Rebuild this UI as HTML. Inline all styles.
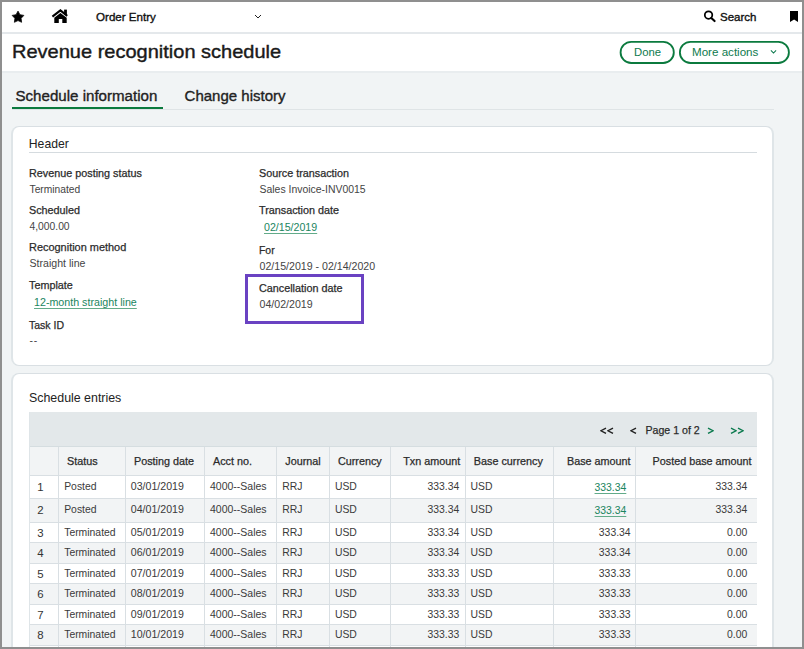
<!DOCTYPE html>
<html><head><meta charset="utf-8"><style>
html,body{margin:0;padding:0;width:804px;height:649px;overflow:hidden;background:#8f8f8f;}
body{position:relative;font-family:"Liberation Sans",sans-serif;}
.r,.t{position:absolute;}
.t{white-space:nowrap;}
.btn{border:2px solid #0b7a3e;border-radius:12px;background:#fff;}
.card{background:#fff;border-style:solid;border-width:1.5px 2px;border-color:#d9dfe3 #dfe5e8;border-radius:8px;}
</style></head><body>
<div class="r" style="left:0px;top:0px;width:804px;height:649px;background:#8f8f8f;"></div>
<div class="r" style="left:2px;top:2px;width:800px;height:645px;background:#f1f4f5;"></div>
<div class="r" style="left:2px;top:2px;width:800px;height:30px;background:#ffffff;"></div>
<div class="r" style="left:2px;top:32px;width:800px;height:2px;background:#e4e8eb;"></div>
<div class="r" style="left:2px;top:34px;width:800px;height:37px;background:#ffffff;"></div>
<div class="r" style="left:2px;top:71px;width:800px;height:2px;background:#e9edef;"></div>
<svg class="r" style="left:6px;top:4.7px" width="24" height="24" viewBox="0 0 24 24"><path d="M12.00 6.10 L13.94 9.63 L17.90 10.38 L15.14 13.32 L15.64 17.32 L12.00 15.60 L8.36 17.32 L8.86 13.32 L6.10 10.38 L10.06 9.63z" fill="#000" stroke="#000" stroke-width="0.7" stroke-linejoin="round"/></svg>
<svg class="r" style="left:46px;top:4.8px" width="28" height="24" viewBox="46 4 28 24"><path d="M52.4 15.6L60.4 9.4L67.2 14.9" stroke="#000" stroke-width="2.1" fill="none" stroke-linejoin="miter"/><rect x="64.1" y="8.6" width="2.8" height="5" fill="#000"/><path d="M54.3 16.8L60.4 12.1L66.7 16.8V21.9H62.3V18.1H58.8V21.9H54.3z" fill="#000"/></svg>
<div class="t " style="left:96px;top:11px;font-size:11.6px;line-height:11.6px;color:#111;font-weight:normal;-webkit-text-stroke:0.35px #111;">Order Entry</div>
<svg class="r" style="left:254px;top:14px" width="8" height="5" viewBox="0 0 8 5"><path d="M1 1l3 3 3-3" stroke="#222" stroke-width="1.0" fill="none"/></svg>
<svg class="r" style="left:698px;top:6px" width="24" height="20" viewBox="698 6 24 20"><circle cx="708.55" cy="15.0" r="3.75" stroke="#000" stroke-width="1.75" fill="none"/><path d="M711.3 17.9L714.6 21.1" stroke="#000" stroke-width="2.1" stroke-linecap="round"/></svg>
<div class="t " style="left:720px;top:12px;font-size:11.5px;line-height:11.5px;color:#111;font-weight:normal;-webkit-text-stroke:0.35px #111;">Search</div>
<svg class="r" style="left:789.9px;top:10.7px" width="8.2" height="11.5" viewBox="0 0 8.2 11.5"><path d="M0 0H8.2V11L4.1 8.5 0 11z" fill="#000"/></svg>
<div class="t " style="left:11.6px;top:42px;font-size:19px;line-height:19px;color:#1a1a1a;font-weight:normal;-webkit-text-stroke:0.4px #1a1a1a;transform:scaleX(1.053);transform-origin:0 0;">Revenue recognition schedule</div>
<svg class="r" style="left:600px;top:34px" width="200" height="37" viewBox="600 34 200 37"><rect x="620.6" y="41.8" width="53.2" height="21.2" rx="10.6" fill="#fff" stroke="#0b7a3e" stroke-width="1.85"/><rect x="679.9" y="41.8" width="109" height="21.2" rx="10.6" fill="#fff" stroke="#0b7a3e" stroke-width="1.85"/></svg>
<div class="t " style="left:634px;top:47px;font-size:11.3px;line-height:11.3px;color:#0e7a4e;font-weight:normal;">Done</div>
<div class="t " style="left:692px;top:46px;font-size:11.6px;line-height:11.6px;color:#0e7a4e;font-weight:normal;">More actions</div>
<svg class="r" style="left:768px;top:48px" width="10" height="8" viewBox="768 48 10 8"><path d="M770.9 50.4L773.5 53.1L776.1 50.4" stroke="#0e7a4e" stroke-width="1.05" fill="none"/></svg>
<div class="t " style="left:15.5px;top:88px;font-size:15.1px;line-height:15.1px;color:#222;font-weight:normal;-webkit-text-stroke:0.35px #222;">Schedule information</div>
<div class="t " style="left:184.6px;top:88px;font-size:15.0px;line-height:15.0px;color:#222;font-weight:normal;-webkit-text-stroke:0.35px #222;">Change history</div>
<div class="r" style="left:12px;top:108.6px;width:762px;height:1.2px;background:#dfe4e6;"></div>
<div class="r" style="left:11.5px;top:106.6px;width:151px;height:2.6px;background:#0b7a3e;"></div>
<div class="r card" style="left:11px;top:126px;width:759px;height:237.5px;"></div>
<div class="t " style="left:28.8px;top:138px;font-size:12.2px;line-height:12.2px;color:#222;font-weight:normal;">Header</div>
<div class="r" style="left:29px;top:152px;width:728px;height:1px;background:#d5dbdf;"></div>
<div class="t " style="left:29px;top:168px;font-size:10.8px;line-height:10.8px;color:#2b2b2b;font-weight:normal;-webkit-text-stroke:0.25px #2b2b2b;">Revenue posting status</div>
<div class="t " style="left:29.5px;top:185px;font-size:10.25px;line-height:10.25px;color:#444;font-weight:normal;">Terminated</div>
<div class="t " style="left:29px;top:205px;font-size:10.8px;line-height:10.8px;color:#2b2b2b;font-weight:normal;-webkit-text-stroke:0.25px #2b2b2b;">Scheduled</div>
<div class="t " style="left:29.5px;top:222px;font-size:10.3px;line-height:10.3px;color:#444;font-weight:normal;">4,000.00</div>
<div class="t " style="left:29px;top:242px;font-size:10.95px;line-height:10.95px;color:#2b2b2b;font-weight:normal;-webkit-text-stroke:0.25px #2b2b2b;">Recognition method</div>
<div class="t " style="left:29.5px;top:258px;font-size:10.6px;line-height:10.6px;color:#444;font-weight:normal;">Straight line</div>
<div class="t " style="left:29px;top:280px;font-size:10.8px;line-height:10.8px;color:#2b2b2b;font-weight:normal;-webkit-text-stroke:0.25px #2b2b2b;">Template</div>
<div class="t " style="left:34px;top:297px;font-size:10.7px;line-height:10.7px;color:#1a8560;font-weight:normal;text-decoration:underline;text-decoration-color:#62ab89;text-underline-offset:2px;text-decoration-thickness:1.2px;">12-month straight line</div>
<div class="t " style="left:29px;top:320px;font-size:10.5px;line-height:10.5px;color:#2b2b2b;font-weight:normal;-webkit-text-stroke:0.25px #2b2b2b;">Task ID</div>
<div class="t " style="left:29.5px;top:336px;font-size:10.4px;line-height:10.4px;color:#444;font-weight:normal;"><span style="letter-spacing:0.8px">--</span></div>
<div class="t " style="left:259px;top:168px;font-size:10.8px;line-height:10.8px;color:#2b2b2b;font-weight:normal;-webkit-text-stroke:0.25px #2b2b2b;">Source transaction</div>
<div class="t " style="left:259.5px;top:185px;font-size:10.45px;line-height:10.45px;color:#444;font-weight:normal;">Sales Invoice-INV0015</div>
<div class="t " style="left:259px;top:205px;font-size:10.8px;line-height:10.8px;color:#2b2b2b;font-weight:normal;-webkit-text-stroke:0.25px #2b2b2b;">Transaction date</div>
<div class="t " style="left:264px;top:222px;font-size:10.64px;line-height:10.64px;color:#1a8560;font-weight:normal;text-decoration:underline;text-decoration-color:#62ab89;text-underline-offset:2px;text-decoration-thickness:1.2px;">02/15/2019</div>
<div class="t " style="left:259px;top:246px;font-size:10.4px;line-height:10.4px;color:#2b2b2b;font-weight:normal;-webkit-text-stroke:0.25px #2b2b2b;">For</div>
<div class="t " style="left:259.5px;top:261px;font-size:10.62px;line-height:10.62px;color:#444;font-weight:normal;">02/15/2019 - 02/14/2020</div>
<div class="t " style="left:259px;top:283px;font-size:10.8px;line-height:10.8px;color:#2b2b2b;font-weight:normal;-webkit-text-stroke:0.25px #2b2b2b;">Cancellation date</div>
<div class="t " style="left:259.5px;top:299px;font-size:10.62px;line-height:10.62px;color:#444;font-weight:normal;">04/02/2019</div>
<div class="r" style="left:245px;top:274px;width:113px;height:44px;border:3px solid #6a42c2;"></div>
<div class="r card" style="left:11px;top:373px;width:759px;height:300px;"></div>
<div class="t " style="left:29px;top:392px;font-size:12.4px;line-height:12.4px;color:#222;font-weight:normal;">Schedule entries</div>
<div class="r" style="left:29px;top:412px;width:728px;height:34.5px;background:#e3e8ea;"></div>
<div class="r" style="left:29px;top:446.5px;width:728px;height:29px;background:#f2f4f5;"></div>
<div class="r" style="left:29px;top:446px;width:728px;height:1px;background:#d5dde0;"></div>
<div class="r" style="left:29px;top:475.3px;width:728px;height:23.5px;background:#ffffff;"></div>
<div class="r" style="left:29px;top:498.8px;width:728px;height:23.499999999999943px;background:#f2f4f5;"></div>
<div class="r" style="left:29px;top:522.3px;width:728px;height:20.200000000000045px;background:#ffffff;"></div>
<div class="r" style="left:29px;top:542.5px;width:728px;height:20.799999999999955px;background:#f2f4f5;"></div>
<div class="r" style="left:29px;top:563.3px;width:728px;height:20.200000000000045px;background:#ffffff;"></div>
<div class="r" style="left:29px;top:583.5px;width:728px;height:20.799999999999955px;background:#f2f4f5;"></div>
<div class="r" style="left:29px;top:604.3px;width:728px;height:20.40000000000009px;background:#ffffff;"></div>
<div class="r" style="left:29px;top:624.7px;width:728px;height:20.59999999999991px;background:#f2f4f5;"></div>
<div class="r" style="left:29px;top:474.8px;width:728px;height:1px;background:#d9dfe3;"></div>
<div class="r" style="left:29px;top:498.3px;width:728px;height:1px;background:#d9dfe3;"></div>
<div class="r" style="left:29px;top:521.8px;width:728px;height:1px;background:#d9dfe3;"></div>
<div class="r" style="left:29px;top:542.0px;width:728px;height:1px;background:#d9dfe3;"></div>
<div class="r" style="left:29px;top:562.8px;width:728px;height:1px;background:#d9dfe3;"></div>
<div class="r" style="left:29px;top:583.0px;width:728px;height:1px;background:#d9dfe3;"></div>
<div class="r" style="left:29px;top:603.8px;width:728px;height:1px;background:#d9dfe3;"></div>
<div class="r" style="left:29px;top:624.2px;width:728px;height:1px;background:#d9dfe3;"></div>
<div class="r" style="left:29px;top:644.8px;width:728px;height:1px;background:#d9dfe3;"></div>
<div class="r" style="left:58.0px;top:446.5px;width:1px;height:200.79999999999995px;background:#d9dfe3;"></div>
<div class="r" style="left:124.7px;top:446.5px;width:1px;height:200.79999999999995px;background:#d9dfe3;"></div>
<div class="r" style="left:204.3px;top:446.5px;width:1px;height:200.79999999999995px;background:#d9dfe3;"></div>
<div class="r" style="left:276.4px;top:446.5px;width:1px;height:200.79999999999995px;background:#d9dfe3;"></div>
<div class="r" style="left:328.7px;top:446.5px;width:1px;height:200.79999999999995px;background:#d9dfe3;"></div>
<div class="r" style="left:390.2px;top:446.5px;width:1px;height:200.79999999999995px;background:#d9dfe3;"></div>
<div class="r" style="left:465.2px;top:446.5px;width:1px;height:200.79999999999995px;background:#d9dfe3;"></div>
<div class="r" style="left:553.0px;top:446.5px;width:1px;height:200.79999999999995px;background:#d9dfe3;"></div>
<div class="r" style="left:635.0px;top:446.5px;width:1px;height:200.79999999999995px;background:#d9dfe3;"></div>
<div class="r" style="left:29px;top:412px;width:1px;height:235.29999999999995px;background:#dfe5e8;"></div>
<div class="t " style="left:67px;top:456px;font-size:10.8px;line-height:10.8px;color:#2b2b2b;font-weight:normal;-webkit-text-stroke:0.25px #2b2b2b;">Status</div>
<div class="t " style="left:134px;top:456px;font-size:10.8px;line-height:10.8px;color:#2b2b2b;font-weight:normal;-webkit-text-stroke:0.25px #2b2b2b;">Posting date</div>
<div class="t " style="left:213px;top:456px;font-size:10.8px;line-height:10.8px;color:#2b2b2b;font-weight:normal;-webkit-text-stroke:0.25px #2b2b2b;">Acct no.</div>
<div class="t " style="left:285.3px;top:456px;font-size:10.8px;line-height:10.8px;color:#2b2b2b;font-weight:normal;-webkit-text-stroke:0.25px #2b2b2b;">Journal</div>
<div class="t " style="left:337.9px;top:456px;font-size:10.8px;line-height:10.8px;color:#2b2b2b;font-weight:normal;-webkit-text-stroke:0.25px #2b2b2b;">Currency</div>
<div class="t " style="right:343.8px;top:456px;font-size:10.8px;line-height:10.8px;color:#2b2b2b;font-weight:normal;text-align:right;-webkit-text-stroke:0.25px #2b2b2b;">Txn amount</div>
<div class="t " style="left:473.8px;top:456px;font-size:10.8px;line-height:10.8px;color:#2b2b2b;font-weight:normal;-webkit-text-stroke:0.25px #2b2b2b;">Base currency</div>
<div class="t " style="right:173.39999999999998px;top:456px;font-size:10.8px;line-height:10.8px;color:#2b2b2b;font-weight:normal;text-align:right;-webkit-text-stroke:0.25px #2b2b2b;">Base amount</div>
<div class="t " style="right:52.39999999999998px;top:456px;font-size:10.8px;line-height:10.8px;color:#2b2b2b;font-weight:normal;text-align:right;-webkit-text-stroke:0.25px #2b2b2b;">Posted base amount</div>
<div class="t " style="left:-59.5px;width:200px;text-align:center;top:482px;font-size:11.4px;line-height:11.4px;color:#333;font-weight:normal;">1</div>
<div class="t " style="left:64.2px;top:482px;font-size:10.4px;line-height:10.4px;color:#3a3a3a;font-weight:normal;">Posted</div>
<div class="t " style="left:130.8px;top:481px;font-size:10.6px;line-height:10.6px;color:#3a3a3a;font-weight:normal;">03/01/2019</div>
<div class="t " style="left:210px;top:481px;font-size:10.5px;line-height:10.5px;color:#3a3a3a;font-weight:normal;">4000--Sales</div>
<div class="t " style="left:282.3px;top:482px;font-size:10.4px;line-height:10.4px;color:#3a3a3a;font-weight:normal;">RRJ</div>
<div class="t " style="left:334.9px;top:482px;font-size:10.4px;line-height:10.4px;color:#3a3a3a;font-weight:normal;">USD</div>
<div class="t " style="right:344.8px;top:482px;font-size:10.4px;line-height:10.4px;color:#3a3a3a;font-weight:normal;text-align:right;">333.34</div>
<div class="t " style="left:470.5px;top:482px;font-size:10.4px;line-height:10.4px;color:#3a3a3a;font-weight:normal;">USD</div>
<div class="t " style="right:177.70000000000005px;top:483px;font-size:10.4px;line-height:10.4px;color:#1a8560;font-weight:normal;text-align:right;text-decoration:underline;text-decoration-color:#62ab89;text-underline-offset:2px;text-decoration-thickness:1.2px;">333.34</div>
<div class="t " style="right:56.799999999999955px;top:482px;font-size:10.4px;line-height:10.4px;color:#3a3a3a;font-weight:normal;text-align:right;">333.34</div>
<div class="t " style="left:-59.5px;width:200px;text-align:center;top:505px;font-size:11.4px;line-height:11.4px;color:#333;font-weight:normal;">2</div>
<div class="t " style="left:64.2px;top:505px;font-size:10.4px;line-height:10.4px;color:#3a3a3a;font-weight:normal;">Posted</div>
<div class="t " style="left:130.8px;top:504px;font-size:10.6px;line-height:10.6px;color:#3a3a3a;font-weight:normal;">04/01/2019</div>
<div class="t " style="left:210px;top:504px;font-size:10.5px;line-height:10.5px;color:#3a3a3a;font-weight:normal;">4000--Sales</div>
<div class="t " style="left:282.3px;top:505px;font-size:10.4px;line-height:10.4px;color:#3a3a3a;font-weight:normal;">RRJ</div>
<div class="t " style="left:334.9px;top:505px;font-size:10.4px;line-height:10.4px;color:#3a3a3a;font-weight:normal;">USD</div>
<div class="t " style="right:344.8px;top:505px;font-size:10.4px;line-height:10.4px;color:#3a3a3a;font-weight:normal;text-align:right;">333.34</div>
<div class="t " style="left:470.5px;top:505px;font-size:10.4px;line-height:10.4px;color:#3a3a3a;font-weight:normal;">USD</div>
<div class="t " style="right:177.70000000000005px;top:506px;font-size:10.4px;line-height:10.4px;color:#1a8560;font-weight:normal;text-align:right;text-decoration:underline;text-decoration-color:#62ab89;text-underline-offset:2px;text-decoration-thickness:1.2px;">333.34</div>
<div class="t " style="right:56.799999999999955px;top:505px;font-size:10.4px;line-height:10.4px;color:#3a3a3a;font-weight:normal;text-align:right;">333.34</div>
<div class="t " style="left:-59.5px;width:200px;text-align:center;top:528px;font-size:11.4px;line-height:11.4px;color:#333;font-weight:normal;">3</div>
<div class="t " style="left:64.2px;top:528px;font-size:10.4px;line-height:10.4px;color:#3a3a3a;font-weight:normal;">Terminated</div>
<div class="t " style="left:130.8px;top:527px;font-size:10.6px;line-height:10.6px;color:#3a3a3a;font-weight:normal;">05/01/2019</div>
<div class="t " style="left:210px;top:527px;font-size:10.5px;line-height:10.5px;color:#3a3a3a;font-weight:normal;">4000--Sales</div>
<div class="t " style="left:282.3px;top:528px;font-size:10.4px;line-height:10.4px;color:#3a3a3a;font-weight:normal;">RRJ</div>
<div class="t " style="left:334.9px;top:528px;font-size:10.4px;line-height:10.4px;color:#3a3a3a;font-weight:normal;">USD</div>
<div class="t " style="right:344.8px;top:528px;font-size:10.4px;line-height:10.4px;color:#3a3a3a;font-weight:normal;text-align:right;">333.34</div>
<div class="t " style="left:470.5px;top:528px;font-size:10.4px;line-height:10.4px;color:#3a3a3a;font-weight:normal;">USD</div>
<div class="t " style="right:173.39999999999998px;top:528px;font-size:10.4px;line-height:10.4px;color:#3a3a3a;font-weight:normal;text-align:right;">333.34</div>
<div class="t " style="right:56.799999999999955px;top:528px;font-size:10.4px;line-height:10.4px;color:#3a3a3a;font-weight:normal;text-align:right;">0.00</div>
<div class="t " style="left:-59.5px;width:200px;text-align:center;top:548px;font-size:11.4px;line-height:11.4px;color:#333;font-weight:normal;">4</div>
<div class="t " style="left:64.2px;top:548px;font-size:10.4px;line-height:10.4px;color:#3a3a3a;font-weight:normal;">Terminated</div>
<div class="t " style="left:130.8px;top:547px;font-size:10.6px;line-height:10.6px;color:#3a3a3a;font-weight:normal;">06/01/2019</div>
<div class="t " style="left:210px;top:547px;font-size:10.5px;line-height:10.5px;color:#3a3a3a;font-weight:normal;">4000--Sales</div>
<div class="t " style="left:282.3px;top:548px;font-size:10.4px;line-height:10.4px;color:#3a3a3a;font-weight:normal;">RRJ</div>
<div class="t " style="left:334.9px;top:548px;font-size:10.4px;line-height:10.4px;color:#3a3a3a;font-weight:normal;">USD</div>
<div class="t " style="right:344.8px;top:548px;font-size:10.4px;line-height:10.4px;color:#3a3a3a;font-weight:normal;text-align:right;">333.34</div>
<div class="t " style="left:470.5px;top:548px;font-size:10.4px;line-height:10.4px;color:#3a3a3a;font-weight:normal;">USD</div>
<div class="t " style="right:173.39999999999998px;top:548px;font-size:10.4px;line-height:10.4px;color:#3a3a3a;font-weight:normal;text-align:right;">333.34</div>
<div class="t " style="right:56.799999999999955px;top:548px;font-size:10.4px;line-height:10.4px;color:#3a3a3a;font-weight:normal;text-align:right;">0.00</div>
<div class="t " style="left:-59.5px;width:200px;text-align:center;top:569px;font-size:11.4px;line-height:11.4px;color:#333;font-weight:normal;">5</div>
<div class="t " style="left:64.2px;top:569px;font-size:10.4px;line-height:10.4px;color:#3a3a3a;font-weight:normal;">Terminated</div>
<div class="t " style="left:130.8px;top:568px;font-size:10.6px;line-height:10.6px;color:#3a3a3a;font-weight:normal;">07/01/2019</div>
<div class="t " style="left:210px;top:568px;font-size:10.5px;line-height:10.5px;color:#3a3a3a;font-weight:normal;">4000--Sales</div>
<div class="t " style="left:282.3px;top:569px;font-size:10.4px;line-height:10.4px;color:#3a3a3a;font-weight:normal;">RRJ</div>
<div class="t " style="left:334.9px;top:569px;font-size:10.4px;line-height:10.4px;color:#3a3a3a;font-weight:normal;">USD</div>
<div class="t " style="right:344.8px;top:569px;font-size:10.4px;line-height:10.4px;color:#3a3a3a;font-weight:normal;text-align:right;">333.33</div>
<div class="t " style="left:470.5px;top:569px;font-size:10.4px;line-height:10.4px;color:#3a3a3a;font-weight:normal;">USD</div>
<div class="t " style="right:173.39999999999998px;top:569px;font-size:10.4px;line-height:10.4px;color:#3a3a3a;font-weight:normal;text-align:right;">333.33</div>
<div class="t " style="right:56.799999999999955px;top:569px;font-size:10.4px;line-height:10.4px;color:#3a3a3a;font-weight:normal;text-align:right;">0.00</div>
<div class="t " style="left:-59.5px;width:200px;text-align:center;top:589px;font-size:11.4px;line-height:11.4px;color:#333;font-weight:normal;">6</div>
<div class="t " style="left:64.2px;top:589px;font-size:10.4px;line-height:10.4px;color:#3a3a3a;font-weight:normal;">Terminated</div>
<div class="t " style="left:130.8px;top:588px;font-size:10.6px;line-height:10.6px;color:#3a3a3a;font-weight:normal;">08/01/2019</div>
<div class="t " style="left:210px;top:588px;font-size:10.5px;line-height:10.5px;color:#3a3a3a;font-weight:normal;">4000--Sales</div>
<div class="t " style="left:282.3px;top:589px;font-size:10.4px;line-height:10.4px;color:#3a3a3a;font-weight:normal;">RRJ</div>
<div class="t " style="left:334.9px;top:589px;font-size:10.4px;line-height:10.4px;color:#3a3a3a;font-weight:normal;">USD</div>
<div class="t " style="right:344.8px;top:589px;font-size:10.4px;line-height:10.4px;color:#3a3a3a;font-weight:normal;text-align:right;">333.33</div>
<div class="t " style="left:470.5px;top:589px;font-size:10.4px;line-height:10.4px;color:#3a3a3a;font-weight:normal;">USD</div>
<div class="t " style="right:173.39999999999998px;top:589px;font-size:10.4px;line-height:10.4px;color:#3a3a3a;font-weight:normal;text-align:right;">333.33</div>
<div class="t " style="right:56.799999999999955px;top:589px;font-size:10.4px;line-height:10.4px;color:#3a3a3a;font-weight:normal;text-align:right;">0.00</div>
<div class="t " style="left:-59.5px;width:200px;text-align:center;top:610px;font-size:11.4px;line-height:11.4px;color:#333;font-weight:normal;">7</div>
<div class="t " style="left:64.2px;top:610px;font-size:10.4px;line-height:10.4px;color:#3a3a3a;font-weight:normal;">Terminated</div>
<div class="t " style="left:130.8px;top:609px;font-size:10.6px;line-height:10.6px;color:#3a3a3a;font-weight:normal;">09/01/2019</div>
<div class="t " style="left:210px;top:609px;font-size:10.5px;line-height:10.5px;color:#3a3a3a;font-weight:normal;">4000--Sales</div>
<div class="t " style="left:282.3px;top:610px;font-size:10.4px;line-height:10.4px;color:#3a3a3a;font-weight:normal;">RRJ</div>
<div class="t " style="left:334.9px;top:610px;font-size:10.4px;line-height:10.4px;color:#3a3a3a;font-weight:normal;">USD</div>
<div class="t " style="right:344.8px;top:610px;font-size:10.4px;line-height:10.4px;color:#3a3a3a;font-weight:normal;text-align:right;">333.33</div>
<div class="t " style="left:470.5px;top:610px;font-size:10.4px;line-height:10.4px;color:#3a3a3a;font-weight:normal;">USD</div>
<div class="t " style="right:173.39999999999998px;top:610px;font-size:10.4px;line-height:10.4px;color:#3a3a3a;font-weight:normal;text-align:right;">333.33</div>
<div class="t " style="right:56.799999999999955px;top:610px;font-size:10.4px;line-height:10.4px;color:#3a3a3a;font-weight:normal;text-align:right;">0.00</div>
<div class="t " style="left:-59.5px;width:200px;text-align:center;top:630px;font-size:11.4px;line-height:11.4px;color:#333;font-weight:normal;">8</div>
<div class="t " style="left:64.2px;top:630px;font-size:10.4px;line-height:10.4px;color:#3a3a3a;font-weight:normal;">Terminated</div>
<div class="t " style="left:130.8px;top:629px;font-size:10.6px;line-height:10.6px;color:#3a3a3a;font-weight:normal;">10/01/2019</div>
<div class="t " style="left:210px;top:629px;font-size:10.5px;line-height:10.5px;color:#3a3a3a;font-weight:normal;">4000--Sales</div>
<div class="t " style="left:282.3px;top:630px;font-size:10.4px;line-height:10.4px;color:#3a3a3a;font-weight:normal;">RRJ</div>
<div class="t " style="left:334.9px;top:630px;font-size:10.4px;line-height:10.4px;color:#3a3a3a;font-weight:normal;">USD</div>
<div class="t " style="right:344.8px;top:630px;font-size:10.4px;line-height:10.4px;color:#3a3a3a;font-weight:normal;text-align:right;">333.33</div>
<div class="t " style="left:470.5px;top:630px;font-size:10.4px;line-height:10.4px;color:#3a3a3a;font-weight:normal;">USD</div>
<div class="t " style="right:173.39999999999998px;top:630px;font-size:10.4px;line-height:10.4px;color:#3a3a3a;font-weight:normal;text-align:right;">333.33</div>
<div class="t " style="right:56.799999999999955px;top:630px;font-size:10.4px;line-height:10.4px;color:#3a3a3a;font-weight:normal;text-align:right;">0.00</div>
<svg class="r" style="left:600.2px;top:426.8px" width="7" height="7.5" viewBox="0 0 7 7"><path d="M6 0.8L1 3.5L6 6.2" stroke="#222" stroke-width="1.35" fill="none"/></svg>
<svg class="r" style="left:607.2px;top:426.8px" width="7" height="7.5" viewBox="0 0 7 7"><path d="M6 0.8L1 3.5L6 6.2" stroke="#222" stroke-width="1.35" fill="none"/></svg>
<svg class="r" style="left:630.2px;top:426.8px" width="7" height="7.5" viewBox="0 0 7 7"><path d="M6 0.8L1 3.5L6 6.2" stroke="#222" stroke-width="1.35" fill="none"/></svg>
<div class="t " style="left:645.5px;top:425px;font-size:10.6px;line-height:10.6px;color:#2b2b2b;font-weight:normal;-webkit-text-stroke:0.25px #2b2b2b;">Page 1 of 2</div>
<svg class="r" style="left:707.3px;top:426.8px" width="7" height="7.5" viewBox="0 0 7 7"><path d="M1 0.8L6 3.5L1 6.2" stroke="#0b7a4e" stroke-width="1.35" fill="none"/></svg>
<svg class="r" style="left:730.4px;top:426.8px" width="7" height="7.5" viewBox="0 0 7 7"><path d="M1 0.8L6 3.5L1 6.2" stroke="#0b7a4e" stroke-width="1.35" fill="none"/></svg>
<svg class="r" style="left:737.1px;top:426.8px" width="7" height="7.5" viewBox="0 0 7 7"><path d="M1 0.8L6 3.5L1 6.2" stroke="#0b7a4e" stroke-width="1.35" fill="none"/></svg>
<div class="r" style="left:0px;top:0px;width:804px;height:2px;background:#8f8f8f;"></div>
<div class="r" style="left:0px;top:647px;width:804px;height:2px;background:#8f8f8f;"></div>
<div class="r" style="left:0px;top:0px;width:2px;height:649px;background:#8f8f8f;"></div>
<div class="r" style="left:802px;top:0px;width:2px;height:649px;background:#8f8f8f;"></div>
</body></html>
